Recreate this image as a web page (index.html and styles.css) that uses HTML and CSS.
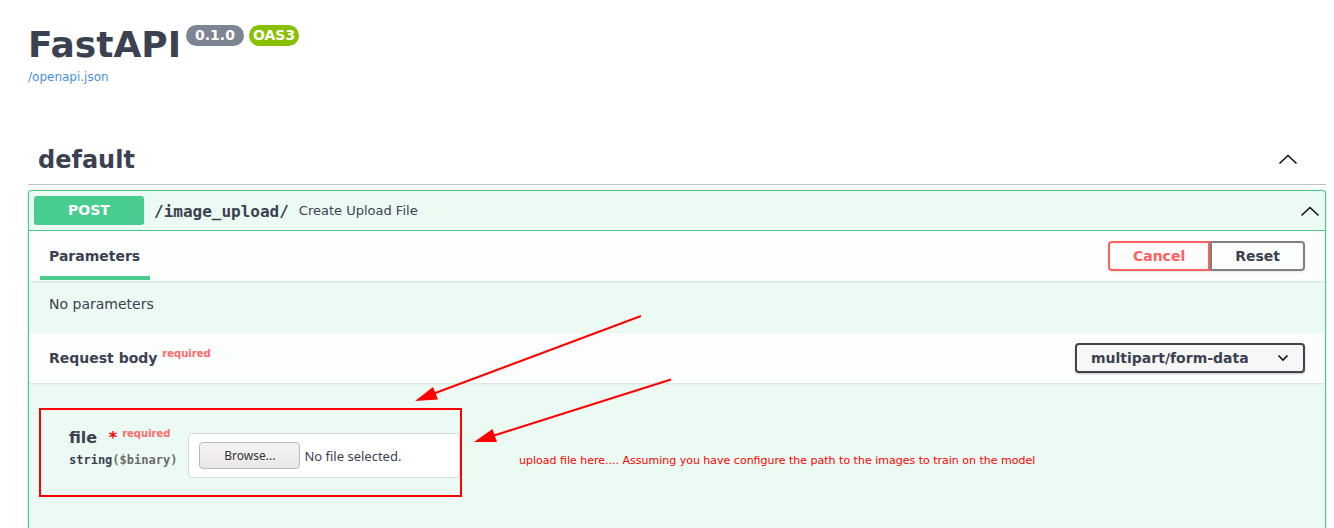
FILE: index.html
```html
<!DOCTYPE html>
<html lang="en">
<head>
<meta charset="utf-8">
<meta name="viewport" content="width=device-width, initial-scale=1">
<title>FastAPI - Swagger UI</title>
<link rel="stylesheet" href="styles.css">
</head>
<body>
<main class="page">
  <header class="info">
    <div class="title-row">
      <h1 class="title">FastAPI</h1>
      <span class="badge">0.1.0</span>
      <span class="badge badge-oas">OAS3</span>
    </div>
    <a class="spec-link" href="/openapi.json">/openapi.json</a>
  </header>

  <div class="tag">
    <h2 class="tag-name">default</h2>
    <button class="toggle" type="button" aria-label="Collapse default">
      <svg class="chevron" viewBox="0 0 20 12"><path d="M1.500 9.500 10 1.500l8.500 8"/></svg>
    </button>
  </div>

  <section class="operation">
    <div class="summary">
      <span class="method">POST</span>
      <a class="path" href="#image_upload">/image_upload/</a>
      <span class="description">Create Upload File</span>
      <button class="toggle" type="button" aria-label="Collapse operation">
        <svg class="chevron" viewBox="0 0 20 12"><path d="M1.500 10.500 10 2.500l8.500 8"/></svg>
      </button>
    </div>

    <div class="section-header">
      <h3 class="tab">Parameters</h3>
      <div class="actions">
        <button class="btn btn-cancel" type="button">Cancel</button>
        <button class="btn btn-reset" type="button">Reset</button>
      </div>
    </div>
    <p class="empty">No parameters</p>

    <div class="section-header">
      <h3 class="section-title">Request body <span class="required">required</span></h3>
      <select class="content-type" aria-label="Request content type">
        <option>multipart/form-data</option>
      </select>
    </div>

    <div class="request-body">
      <div class="field">
        <div class="field-label">
          <label class="field-name" for="file">file <span class="star">*</span><span class="required">required</span></label>
          <div class="field-type">string<span class="format">($binary)</span></div>
        </div>
        <div class="picker">
          <span class="browse">Browse...</span>
          <span class="file-status">No file selected.</span>
          <input class="file-input" id="file" type="file">
        </div>
      </div>
      <p class="note">upload file here.... Assuming you have configure the path to the images to train on the model</p>
      <svg class="arrows" width="260" height="130" viewBox="414 314 260 130" aria-hidden="true">
        <path class="shaft" d="M641 316 434 393.500M671 379.500 494 435.500"/>
        <path class="head" d="M415 401 433 387 438 399.500ZM474 442 492.500 429 497 442Z"/>
      </svg>
    </div>
  </section>
</main>
</body>
</html>
```
FILE: styles.css
```css
* {
  box-sizing: border-box;
}

body {
  margin: 0;
  background: #fff;
  color: #3b4151;
  font-family: "DejaVu Sans", sans-serif;
  font-size: 14px;
}

h1, h2, h3, p {
  margin: 0;
}

button {
  font-family: inherit;
  cursor: pointer;
}

.page {
  display: flex;
  flex-direction: column;
  min-height: 100vh;
  padding: 23px 8px 0 28px;
}

.info {
  display: flex;
  flex-direction: column;
  align-items: flex-start;
  gap: 2px;
}

.title-row {
  display: flex;
  align-items: flex-start;
  gap: 5px;
}

.title {
  font-size: 36px;
  line-height: 44px;
}

.badge {
  margin-top: 2px;
  padding: 0 9px;
  border-radius: 11px;
  background: #7d8492;
  color: #fff;
  font-weight: bold;
  line-height: 21px;
}

.badge-oas {
  padding: 0 4px;
  background: #89bf04;
}

.spec-link {
  color: #4990e2;
  font-size: 12px;
  line-height: 16px;
  text-decoration: none;
}

.tag {
  display: flex;
  align-items: center;
  justify-content: space-between;
  height: 50px;
  margin: 50px 0 5px;
  padding: 0 28px 0 10px;
  border-bottom: 1px solid #c0c2c8;
}

.tag-name {
  font-size: 24px;
  line-height: 30px;
}

.toggle {
  display: flex;
  padding: 0;
  border: 0;
  background: none;
}

.chevron {
  width: 20px;
  height: 12px;
  fill: none;
  stroke: #111;
  stroke-width: 1.6;
}

.operation {
  flex: 1;
  border: 1px solid #49cc90;
  border-bottom: 0;
  border-radius: 4px 4px 0 0;
  background: #ebfaf3;
  box-shadow: 0 0 3px rgba(0, 0, 0, 0.19);
}

.summary {
  display: flex;
  align-items: center;
  gap: 10px;
  height: 40px;
  padding: 0 5px;
  border-bottom: 1px solid #49cc90;
}

.method {
  width: 110px;
  border-radius: 3px;
  background: #49cc90;
  color: #fff;
  font-weight: bold;
  line-height: 29px;
  text-align: center;
}

.path {
  padding-top: 2px;
  color: #3b4151;
  font: bold 16px/20px "DejaVu Sans Mono", monospace;
  text-decoration: none;
}

.description {
  flex: 1;
  font-size: 13px;
}

.section-header {
  display: flex;
  align-items: center;
  justify-content: space-between;
  position: relative;
  height: 50px;
  padding: 0 20px 0 11px;
  background: #fcfefd;
  box-shadow: 0 1px 2px rgba(0, 0, 0, 0.1);
}

.tab {
  align-self: flex-end;
  min-width: 110px;
  padding: 5px 9px 0;
  margin-bottom: 1px;
  border-bottom: 4px solid #49cc90;
  font-size: 14px;
  line-height: 40px;
}

.section-title {
  padding-left: 9px;
  font-size: 14px;
  line-height: 20px;
}

.required {
  color: #ff6b6b;
  font-size: 10px;
  font-weight: bold;
  line-height: 10px;
  vertical-align: super;
}

.actions {
  display: flex;
}

.btn {
  height: 30px;
  padding: 0 23px;
  border: 2px solid #808080;
  background: transparent;
  box-shadow: 0 1px 2px rgba(0, 0, 0, 0.1);
  color: #3b4151;
  font-size: 14px;
  font-weight: bold;
}

.btn-cancel {
  border-color: #ff6060;
  border-radius: 4px 0 0 4px;
  color: #ff6060;
}

.btn-reset {
  border-radius: 0 4px 4px 0;
}

.empty {
  padding: 13px 20px 19px;
  line-height: 20px;
}

.content-type {
  width: 230px;
  height: 30px;
  padding: 0 14px;
  border: 2px solid #41444e;
  border-radius: 4px;
  appearance: none;
  background: #f7f7f7 url("data:image/svg+xml,%3Csvg xmlns='http://www.w3.org/2000/svg' viewBox='0 0 12 8'%3E%3Cpath d='M1.500 1.500 6 6l4.500-4.500' fill='none' stroke='%23111' stroke-width='1.600'/%3E%3C/svg%3E") right 14px center / 12px 8px no-repeat;
  box-shadow: 0 1px 2px rgba(0, 0, 0, 0.25);
  color: #3b4151;
  font: bold 14px "DejaVu Sans", sans-serif;
}

.request-body {
  display: flex;
  align-items: center;
  gap: 57px;
  position: relative;
  padding: 25px 10px 31px;
}

.field {
  display: flex;
  flex: none;
  align-items: flex-start;
  gap: 11px;
  width: 423px;
  height: 89px;
  padding: 18px 0 0 28px;
  border: 2px solid #f00;
}

.field-label {
  flex: none;
}

.field-name {
  display: block;
  font-size: 16px;
  font-weight: bold;
  line-height: 20px;
}

.star {
  margin: 0 5px 0 6px;
  color: #f00;
}

.field-type {
  padding-top: 4px;
  font: bold 12px/16px "DejaVu Sans Mono", monospace;
}

.format {
  color: #6b6b6b;
}

.picker {
  display: flex;
  flex: 1;
  align-items: center;
  gap: 4px;
  position: relative;
  height: 45px;
  margin-top: 5px;
  padding: 0 10px;
  border: 1px solid #d9d9d9;
  border-radius: 4px;
  background: #fff;
  font-family: "Noto Sans", sans-serif;
  font-size: 12px;
}

.browse {
  width: 101px;
  border: 1px solid #c0b8b2;
  border-radius: 4px;
  background: linear-gradient(#f5f4f3, #eae8e6);
  color: #2e3436;
  line-height: 25px;
  text-align: center;
}

.file-status {
  font-size: 13px;
}

.file-input {
  position: absolute;
  inset: 0;
  width: 100%;
  opacity: 0;
  cursor: pointer;
}

.note {
  padding-top: 16px;
  color: #f00;
  font-size: 11px;
  line-height: 16px;
}

.arrows {
  position: absolute;
  top: -69px;
  left: 385px;
  pointer-events: none;
}

.shaft {
  fill: none;
  stroke: #f00;
  stroke-width: 2;
}

.head {
  fill: #f00;
}
```
